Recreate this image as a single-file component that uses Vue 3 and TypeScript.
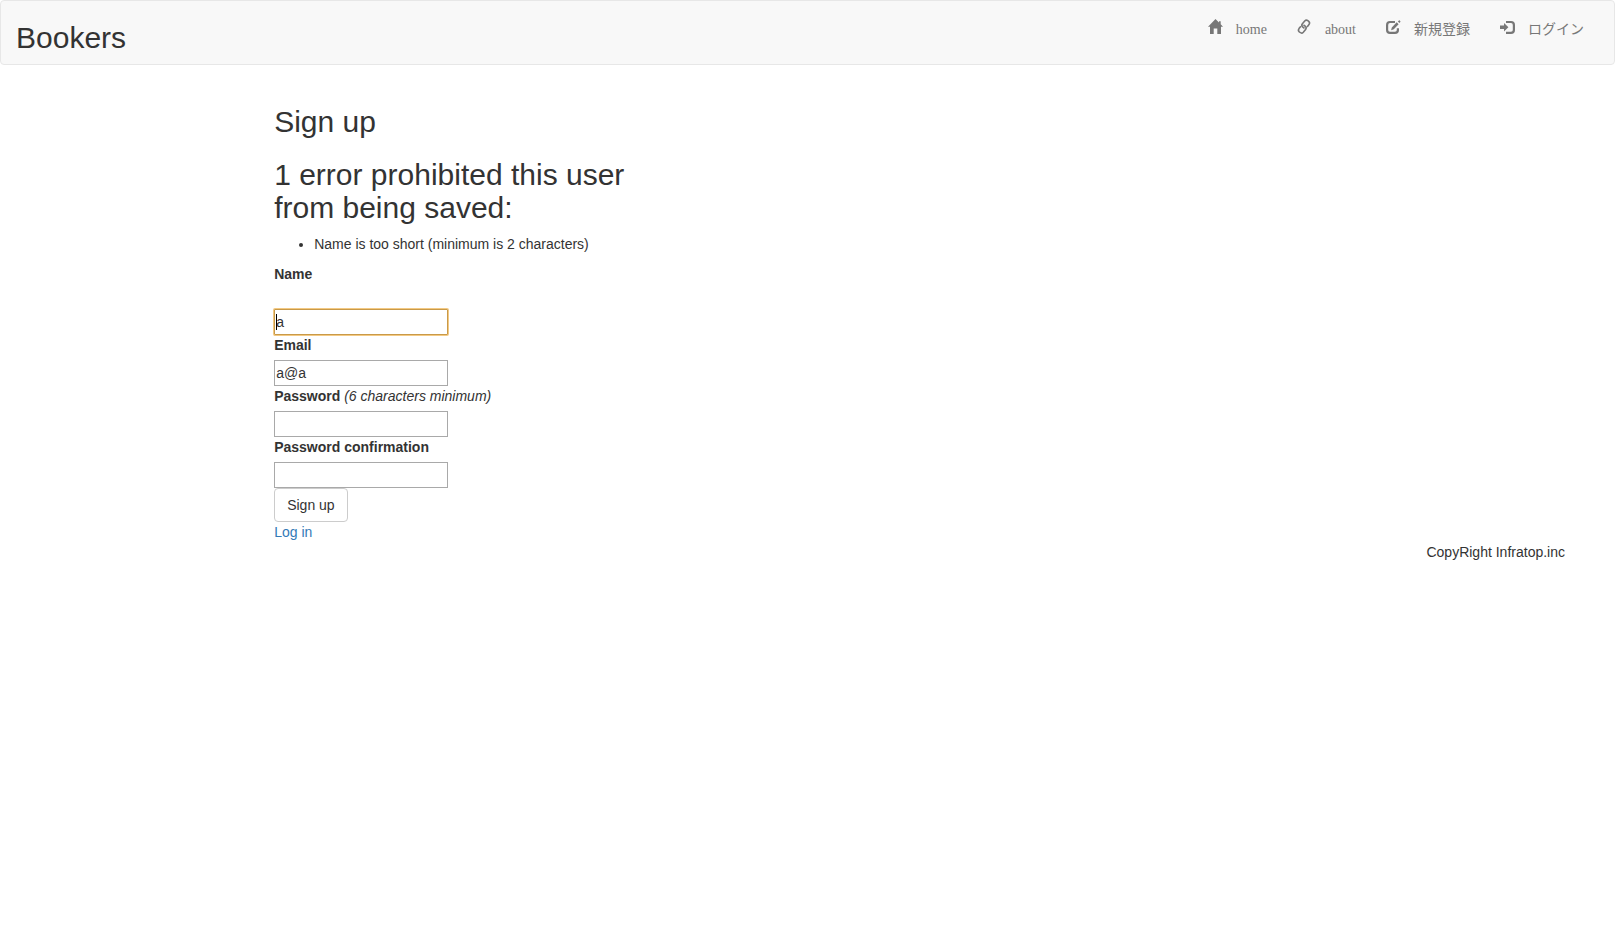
<script setup lang="ts">
import { ref } from 'vue'

interface NavItem {
  label: string
  icon: 'home' | 'link' | 'edit' | 'login'
}

const navItems: NavItem[] = [
  { label: 'home', icon: 'home' },
  { label: 'about', icon: 'link' },
  { label: '新規登録', icon: 'edit' },
  { label: 'ログイン', icon: 'login' },
]

const errors: string[] = ['Name is too short (minimum is 2 characters)']

const name = ref('a')
const email = ref('a@a')
const password = ref('')
const confirmation = ref('')
</script>

<template>
  <div class="page">
    <header class="navbar">
      <h2 class="brand">Bookers</h2>
      <nav>
        <ul class="nav-list">
          <li v-for="item in navItems" :key="item.icon">
            <a href="#" class="nav-link">
              <svg class="icon" viewBox="0 0 14 15" aria-hidden="true">
                <path
                  v-if="item.icon === 'home'"
                  d="M7.5 0 11 3.6V2.2h1.7v3.1L15 7.8H13V15H9.3V9.6H5.7V15H2V7.8H0Z"
                />
                <g v-else-if="item.icon === 'link'" class="stroke thin">
                  <path d="M7.5 9.4 5.6 7.9Q4.1 6.4 5.4 4.8L7.7 2Q9.2 .4 10.8 1.7L11.7 2.4Q13.3 3.8 12 5.6L10.1 7.9" />
                  <path d="M6.5 5.8 8.4 7.3Q9.9 8.8 8.6 10.4L6.3 13.2Q4.8 14.8 3.2 13.5L2.3 12.8Q.7 11.4 2 9.6L3.9 7.3" />
                </g>
                <g v-else-if="item.icon === 'edit'">
                  <path class="stroke" d="M9 3H4Q1.1 3 1.1 5.9V11Q1.1 13.9 4 13.9H9Q11.9 13.9 11.9 11V9.2" />
                  <path d="M5.1 11.3 5.8 8.4 10.7 3.3 12.6 5.2 7.8 10.3ZM11.9 2.5 12.9 1.5Q13.3 1.2 13.7 1.6L14.3 2.2Q14.7 2.7 14.3 3.1L13.4 4Z" />
                </g>
                <g v-else>
                  <path d="M0 6.6H4V4L8.4 8.3 4 12.6V10H0Z" />
                  <path class="stroke" d="M6 3H11Q13.9 3 13.9 5.9V11Q13.9 13.9 11 13.9H6" />
                </g>
              </svg>
              <span>{{ item.label }}</span>
            </a>
          </li>
        </ul>
      </nav>
    </header>

    <main class="content">
      <h2>Sign up</h2>
      <form @submit.prevent>
        <section class="errors">
          <h2>{{ errors.length }} error prohibited this user from being saved:</h2>
          <ul>
            <li v-for="error in errors" :key="error">{{ error }}</li>
          </ul>
        </section>

        <div class="field spaced">
          <label for="user_name">Name</label>
          <div class="control">
            <input id="user_name" v-model="name" class="active" type="text" />
            <span class="caret"></span>
          </div>
        </div>
        <div class="field">
          <label for="user_email">Email</label>
          <input id="user_email" v-model="email" type="email" />
        </div>
        <div class="field">
          <div class="label-line">
            <label for="user_password">Password</label>
            <em> (6 characters minimum)</em>
          </div>
          <input id="user_password" v-model="password" type="password" />
        </div>
        <div class="field">
          <label for="user_confirmation">Password confirmation</label>
          <input id="user_confirmation" v-model="confirmation" type="password" />
        </div>
        <button type="submit">Sign up</button>
      </form>
      <a href="#" class="login-link">Log in</a>
    </main>

    <footer>CopyRight Infratop.inc</footer>
  </div>
</template>

<style>
body {
  margin: 0;
  background: #fff;
}
</style>

<style scoped>
.page,
.page * {
  box-sizing: border-box;
}

.page {
  color: #333;
  font-family: "Liberation Sans", Arial, "Noto Sans CJK JP", sans-serif;
  font-size: 14px;
  line-height: 20px;
}

h2 {
  margin: 20px 0 10px;
  font-size: 30px;
  font-weight: 500;
  line-height: 33px;
}

.navbar {
  display: flex;
  justify-content: space-between;
  margin-bottom: 20px;
  padding: 0 15px;
  background: #f8f8f8;
  border: 1px solid #e7e7e7;
  border-radius: 4px;
}

.nav-list {
  display: flex;
  margin: 0;
  padding: 0;
  list-style: none;
}

.nav-link {
  display: flex;
  gap: 14px;
  padding: 18px 15px 0;
  color: #777;
  font-family: "Liberation Serif", "Noto Sans CJK JP", serif;
  line-height: 22px;
  text-decoration: none;
}

.icon {
  width: 14px;
  height: 15px;
  overflow: visible;
  fill: currentColor;
}

.stroke {
  fill: none;
  stroke: currentColor;
  stroke-width: 2.2;
}

.thin {
  stroke-width: 1.6;
}

.content {
  display: flow-root;
  width: 25%;
  margin-left: calc(100% / 6 + 5px);
  padding-right: 30px;
}

.errors ul {
  margin: 0 0 10px;
  padding-left: 40px;
}

.field {
  display: flex;
  flex-direction: column;
  align-items: flex-start;
  gap: 5px;
}

.spaced {
  gap: 25px;
}

label {
  font-weight: 700;
}

.control {
  position: relative;
}

input {
  display: block;
  width: 174px;
  height: 26px;
  padding: 1px;
  color: #333;
  font: inherit;
  background: #fff;
  border: 1px solid #a9a9a9;
  border-radius: 0;
}

input.active,
input:focus {
  border-color: #c99a49;
  outline: none;
  border-radius: 1px;
  box-shadow: 0 0 0 1px #f3c983;
}

.caret {
  position: absolute;
  top: 5px;
  left: 2px;
  width: 1px;
  height: 16px;
  background: #000;
}

button {
  display: block;
  padding: 6px 12px;
  color: #333;
  font: inherit;
  background: #fff;
  border: 1px solid #ccc;
  border-radius: 4px;
}

.login-link {
  color: #337ab7;
  text-decoration: none;
}

footer {
  padding-right: 50px;
  text-align: right;
}
</style>
